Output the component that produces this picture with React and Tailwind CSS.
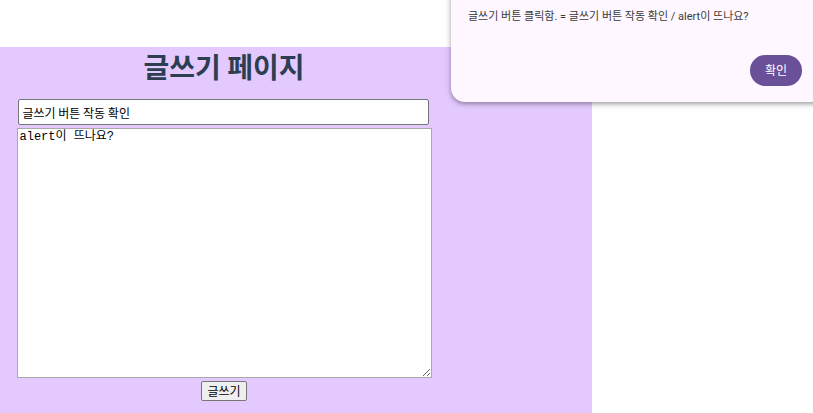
import React from 'react';

const App = () => {
  return (
    <div className="relative w-[813px] h-[413px] overflow-hidden bg-white font-['Liberation_Sans','Noto_Sans_CJK_KR',sans-serif]">
      <div className="pt-[47px]">
        <div className="w-[592px] h-[366px] bg-[#e4c9ff]">
          <div className="w-[448px] flex flex-col items-center">
            <h1 className="mt-[1px] text-[28px] leading-[36px] font-bold text-[#2c3e50] font-['Noto_Sans_CJK_KR',sans-serif]">
              글쓰기 페이지
            </h1>
            <input
              className="mt-[15px] ml-[-2px] w-[411px] h-[26px] px-[4px] bg-white border border-[#767676] rounded-[2px] text-[12px] text-black outline-none font-['Noto_Sans_CJK_KR',sans-serif]"
              defaultValue="글쓰기 버튼 작동 확인"
            />
            <textarea
              className="mt-[3px] w-[415px] h-[250px] px-[2px] py-[1px] bg-white border border-[#a9a9a9] text-[12px] leading-[15px] text-black outline-none resize-y font-['Liberation_Mono','Noto_Sans_CJK_KR',monospace]"
              defaultValue="alert이 뜨나요?"
            />
            <button className="mt-[3px] h-[20px] px-[5px] bg-[#efefef] border border-[#767676] rounded-[2px] text-[12px] text-black leading-none font-['Noto_Sans_CJK_KR',sans-serif]">
              글쓰기
            </button>
          </div>
        </div>
      </div>

      <div className="absolute left-[451px] top-[-20px] w-[380px] h-[122px] bg-[#fef7ff] rounded-[14px] shadow-[0_2px_4px_rgba(0,0,0,0.3),0_1px_8px_rgba(0,0,0,0.12)] font-['Roboto','Noto_Sans_CJK_KR',sans-serif]">
        <div className="pt-[30px] pl-[17px] text-[11px] leading-[14px] text-[#3a3a3a]">
          글쓰기 버튼 클릭함. = 글쓰기 버튼 작동 확인 / alert이 뜨나요?
        </div>
        <div className="absolute left-[299px] top-[75px] w-[52px] h-[31px] rounded-full bg-[#6a4f99] flex items-center justify-center text-[12px] text-white">
          확인
        </div>
      </div>
    </div>
  );
};

export default App;
